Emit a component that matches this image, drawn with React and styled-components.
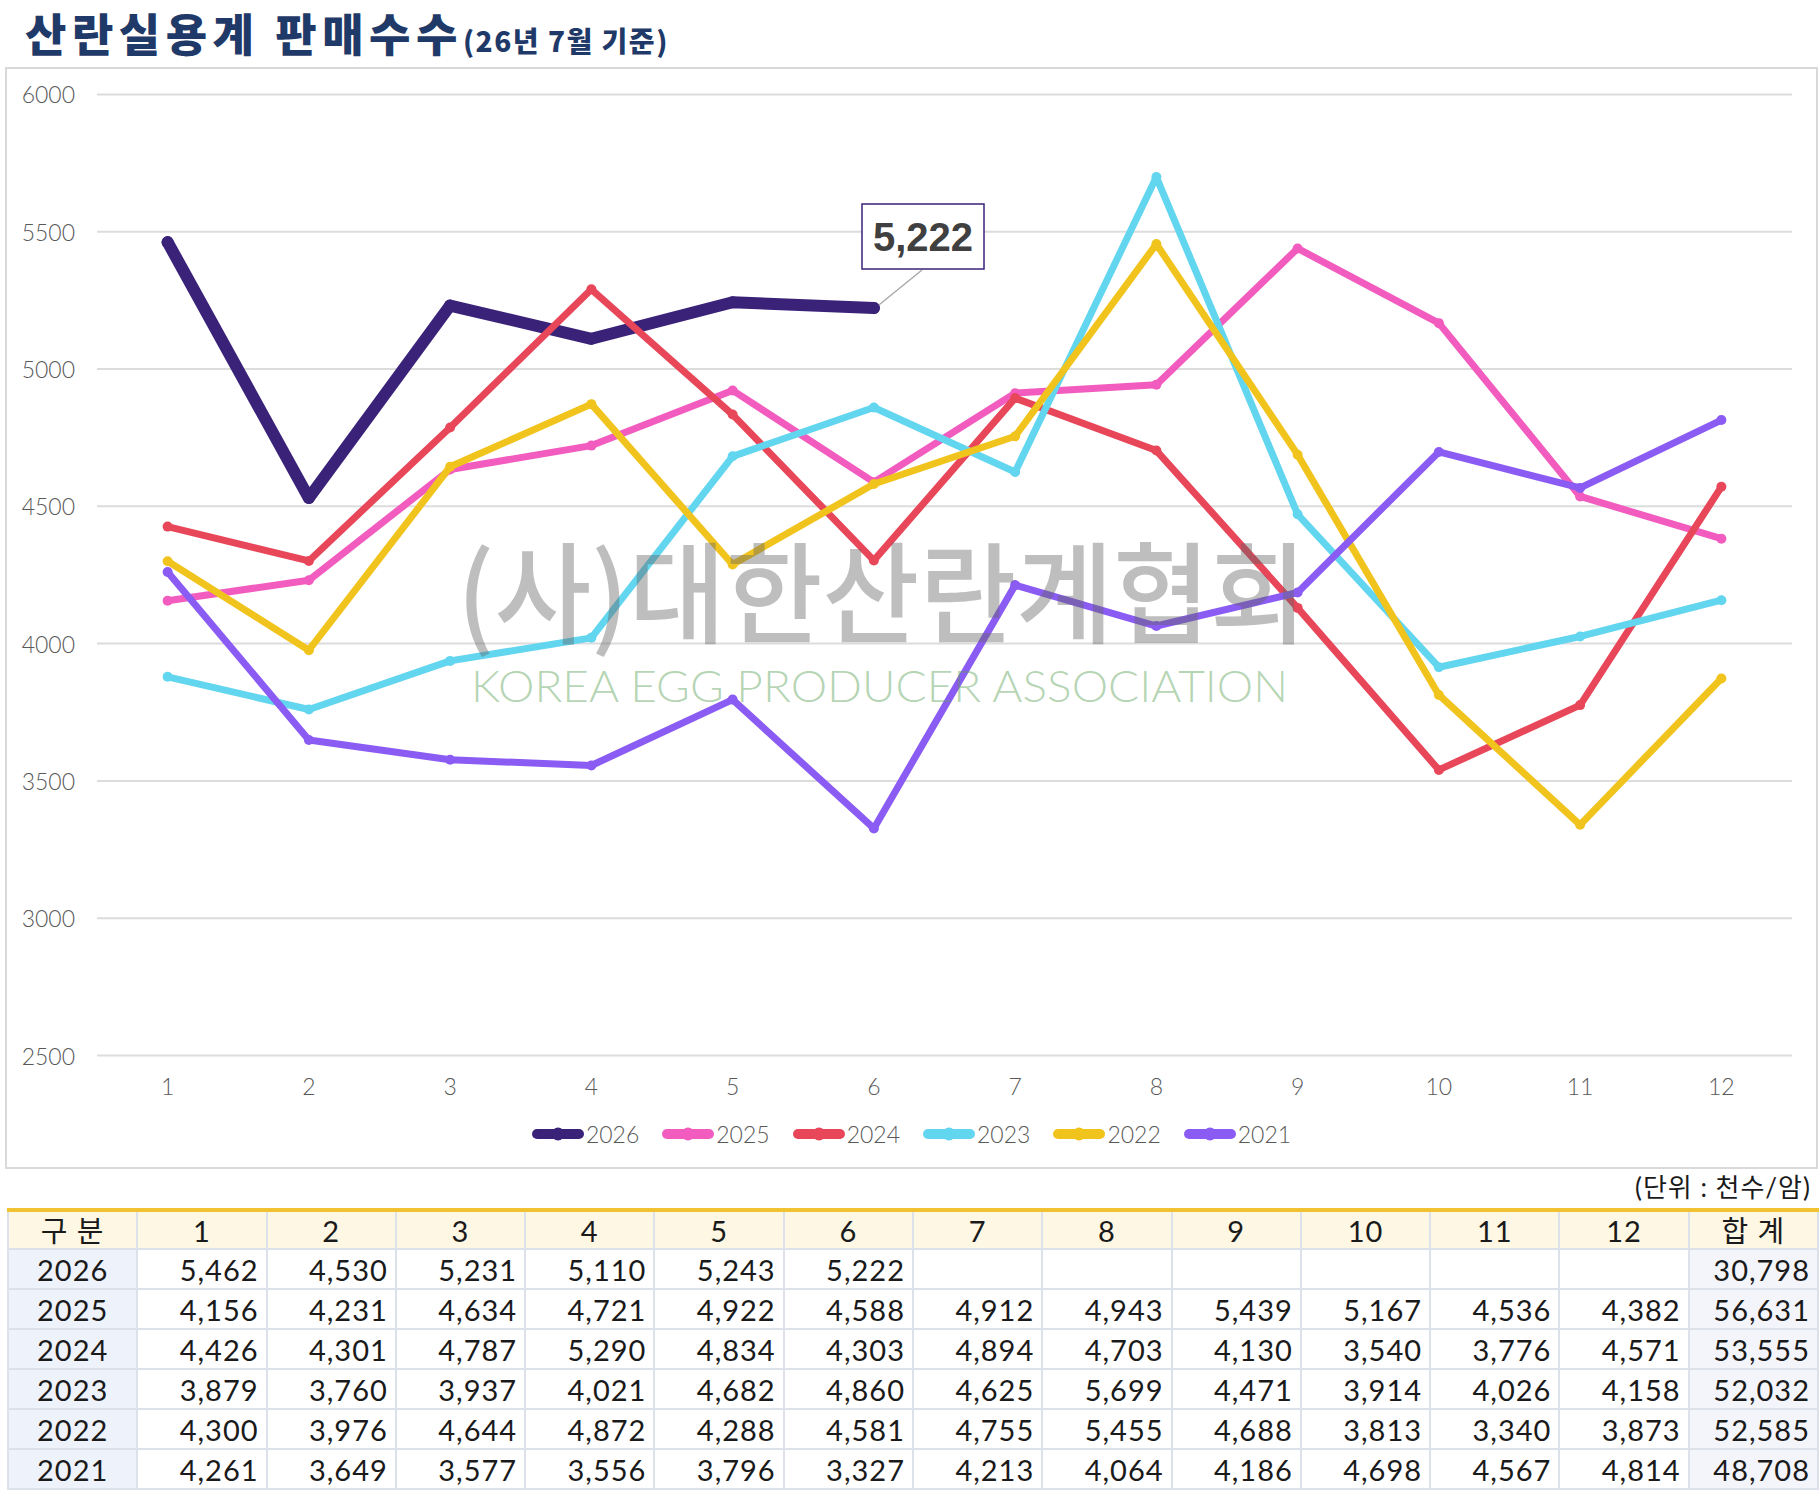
import React from 'react';
import styled, {createGlobalStyle} from 'styled-components';

const GlobalStyle = createGlobalStyle`
  html, body {
    margin: 0;
    padding: 0;
    background: #fff;
  }
  body {
    font-family: Lato, "Noto Sans CJK KR", sans-serif;
    color: #1a1a1a;
  }
`;

const SERIES = [
  {year: '2026', color: '#3a2279', width: 12, values: [5462, 4530, 5231, 5110, 5243, 5222], total: '30,798'},
  {year: '2025', color: '#f25cbf', width: 7, values: [4156, 4231, 4634, 4721, 4922, 4588, 4912, 4943, 5439, 5167, 4536, 4382], total: '56,631'},
  {year: '2024', color: '#e8475a', width: 7, values: [4426, 4301, 4787, 5290, 4834, 4303, 4894, 4703, 4130, 3540, 3776, 4571], total: '53,555'},
  {year: '2023', color: '#62d5ef', width: 7, values: [3879, 3760, 3937, 4021, 4682, 4860, 4625, 5699, 4471, 3914, 4026, 4158], total: '52,032'},
  {year: '2022', color: '#f1c41d', width: 7, values: [4300, 3976, 4644, 4872, 4288, 4581, 4755, 5455, 4688, 3813, 3340, 3873], total: '52,585'},
  {year: '2021', color: '#8b5cf3', width: 7, values: [4261, 3649, 3577, 3556, 3796, 3327, 4213, 4064, 4186, 4698, 4567, 4814], total: '48,708'}
];

const TICKS = [6000, 5500, 5000, 4500, 4000, 3500, 3000, 2500];
const MONTHS = [1, 2, 3, 4, 5, 6, 7, 8, 9, 10, 11, 12];

// plot geometry, in page pixels
const PLOT_LEFT = 97;
const PLOT_RIGHT = 1792;
const STEP = (PLOT_RIGHT - PLOT_LEFT) / 12;
const TOP = 94.4;
const PER_UNIT = 0.2746;

const xAt = i => PLOT_LEFT + (i + 0.5) * STEP;
const yAt = v => TOP + (6000 - v) * PER_UNIT;
const fmt = v => v.toLocaleString('en-US');

const Page = styled.div`
  width: 1820px;
  height: 1490px;
  overflow: hidden;
  background: #fff;
`;

const TitleRow = styled.h1`
  margin: 0;
  height: 67px;
  box-sizing: border-box;
  padding: 0 0 0 25px;
  display: flex;
  align-items: baseline;
  color: #1f3a68;
  font-family: "Noto Sans CJK KR", sans-serif;
  font-weight: 900;
  font-size: 45px;
  line-height: 65px;
  letter-spacing: 5.5px;
  white-space: nowrap;
`;

const TitleNote = styled.span`
  font-size: 28px;
  letter-spacing: 1.5px;
`;

const ChartCard = styled.section`
  margin-left: 5px;
  width: 1813px;
  box-sizing: border-box;
  border: 2px solid #d9d9d9;
  padding-bottom: 8px;
`;

const Plot = styled.svg`
  display: block;
`;

const AxisText = styled.text`
  font-family: Lato, "Noto Sans", sans-serif;
  font-weight: 300;
  font-size: 23px;
  fill: #595959;
`;

const CalloutText = styled.text`
  font-family: "Liberation Sans", Arial, sans-serif;
  font-weight: 700;
  font-size: 40px;
  fill: #404040;
`;

const WatermarkKo = styled.text`
  font-family: "Noto Sans CJK KR", sans-serif;
  font-weight: 500;
  font-size: 110px;
  fill: rgba(100, 100, 100, 0.42);
`;

const WatermarkEn = styled.text`
  font-family: Lato, "Noto Sans", sans-serif;
  font-weight: 300;
  font-size: 43px;
  fill: rgba(90, 160, 85, 0.45);
`;

const Legend = styled.div`
  height: 50px;
  display: flex;
  justify-content: center;
  align-items: center;
  gap: 23px;
`;

const LegendItem = styled.div`
  display: flex;
  align-items: center;
  gap: 2px;
  font-family: Lato, "Noto Sans", sans-serif;
  font-weight: 300;
  font-size: 23px;
  color: #595959;
`;

const UnitNote = styled.div`
  height: 39px;
  box-sizing: border-box;
  padding: 3px 9px 0 0;
  text-align: right;
  font-family: Lato, "Noto Sans CJK KR", sans-serif;
  font-size: 26px;
  letter-spacing: 1px;
  line-height: 30px;
  color: #1a1a1a;
`;

const Table = styled.table`
  margin-left: 7px;
  width: 1812px;
  table-layout: fixed;
  border-collapse: collapse;
  border-top: 4px solid #f1c232;
  font-family: Lato, "Noto Sans CJK KR", sans-serif;
  font-size: 29px;
  letter-spacing: 1px;
  color: #1a1a1a;
`;

const HeadCell = styled.th`
  height: 36px;
  padding: 0;
  background: #fdf7e3;
  border: 2px solid #dde1ea;
  border-top: 4px solid #f1c232;
  font-weight: 400;
  text-align: center;
  line-height: 1;
`;

const Cell = styled.td`
  height: 38px;
  padding: 0 7px 0 0;
  border: 2px solid #dde1ea;
  text-align: right;
  line-height: 1;
  background: ${p => (p.$kind === 'year' ? '#eef2fb' : p.$kind === 'total' ? '#f4f5fb' : '#fff')};
  ${p => p.$kind === 'year' && 'text-align: center; padding: 0;'}
`;

function LegendMarker({color}) {
  return (
    <svg width="52" height="14" viewBox="0 0 52 14">
      <line x1="5" y1="7" x2="47" y2="7" stroke={color} strokeWidth="10" strokeLinecap="round" />
      <circle cx="26" cy="7" r="6.5" fill={color} />
    </svg>
  );
}

function Chart() {
  const last = SERIES[0].values.length - 1;
  const lx = xAt(last);
  const ly = yAt(SERIES[0].values[last]);
  return (
    <Plot width="1809" height="1040" viewBox="7 69 1809 1040">
      {TICKS.map(t => (
        <g key={t}>
          <line x1={PLOT_LEFT} x2={PLOT_RIGHT} y1={yAt(t)} y2={yAt(t)} stroke="#dcdcdc" strokeWidth="2" />
          <AxisText x="75" y={yAt(t)} textAnchor="end" dominantBaseline="central">
            {t}
          </AxisText>
        </g>
      ))}
      {MONTHS.map((m, i) => (
        <AxisText key={m} x={xAt(i)} y="1086" textAnchor="middle" dominantBaseline="central">
          {m}
        </AxisText>
      ))}
      {SERIES.map(s => (
        <g key={s.year}>
          <polyline
            points={s.values.map((v, i) => `${xAt(i)},${yAt(v)}`).join(' ')}
            fill="none"
            stroke={s.color}
            strokeWidth={s.width}
            strokeLinejoin="round"
            strokeLinecap="round"
          />
          {s.values.map((v, i) => (
            <circle key={i} cx={xAt(i)} cy={yAt(v)} r={s.width > 10 ? s.width / 2 : s.width / 2 + 1.5} fill={s.color} />
          ))}
        </g>
      ))}
      <line x1="922" y1="270" x2={lx + 5} y2={ly - 3} stroke="#a6a6a6" strokeWidth="1.3" />
      <rect x="862" y="204" width="122" height="65" fill="#fff" stroke="#3a2279" strokeWidth="1.5" />
      <CalloutText x="923" y="251" textAnchor="middle">
        5,222
      </CalloutText>
      <WatermarkKo x="457" y="635" textLength="850" lengthAdjust="spacingAndGlyphs">
        (사)대한산란계협회
      </WatermarkKo>
      <WatermarkEn x="471" y="702" textLength="817" lengthAdjust="spacingAndGlyphs">
        KOREA EGG PRODUCER ASSOCIATION
      </WatermarkEn>
    </Plot>
  );
}

export default function App() {
  return (
    <Page>
      <GlobalStyle />
      <TitleRow>
        산란실용계 판매수수
        <TitleNote>(26년 7월 기준)</TitleNote>
      </TitleRow>
      <ChartCard>
        <Chart />
        <Legend>
          {SERIES.map(s => (
            <LegendItem key={s.year}>
              <LegendMarker color={s.color} />
              {s.year}
            </LegendItem>
          ))}
        </Legend>
      </ChartCard>
      <UnitNote>(단위 : 천수/암)</UnitNote>
      <Table>
        <thead>
          <tr>
            <HeadCell>구 분</HeadCell>
            {MONTHS.map(m => (
              <HeadCell key={m}>{m}</HeadCell>
            ))}
            <HeadCell>합 계</HeadCell>
          </tr>
        </thead>
        <tbody>
          {SERIES.map(s => (
            <tr key={s.year}>
              <Cell $kind="year">{s.year}</Cell>
              {MONTHS.map((m, i) => (
                <Cell key={m}>{s.values[i] !== undefined ? fmt(s.values[i]) : ''}</Cell>
              ))}
              <Cell $kind="total">{s.total}</Cell>
            </tr>
          ))}
        </tbody>
      </Table>
    </Page>
  );
}
